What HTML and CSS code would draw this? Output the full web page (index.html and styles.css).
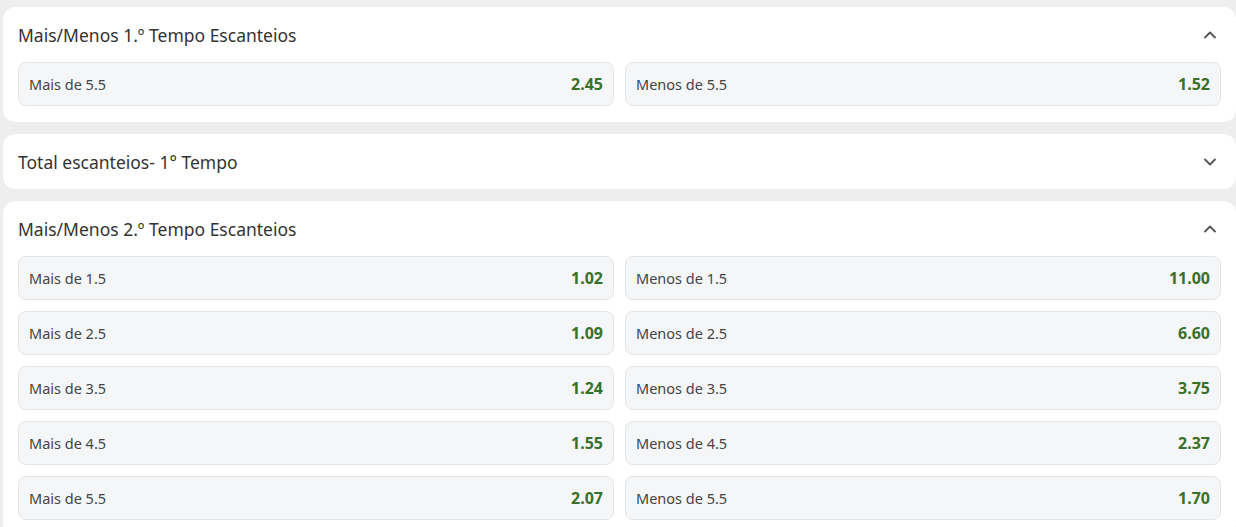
FILE: index.html
```html
<!DOCTYPE html>
<html lang="pt">
<head>
<meta charset="utf-8">
<link rel="stylesheet" href="styles.css">
</head>
<body>
<div class="list">
  <section class="card">
    <div class="head">
      <span class="title">Mais/Menos 1.º Tempo Escanteios</span>
      <svg class="chev" width="14" height="14" viewBox="0 0 14 14"><path d="M2 9.5 L7 4.5 L12 9.5" fill="none" stroke="#555" stroke-width="1.8" stroke-linecap="round" stroke-linejoin="round"/></svg>
    </div>
    <div class="grid">
      <div class="odd"><span class="lbl">Mais de 5.5</span><span class="val">2.45</span></div>
      <div class="odd"><span class="lbl">Menos de 5.5</span><span class="val">1.52</span></div>
    </div>
  </section>
  <section class="card closed">
    <div class="head">
      <span class="title">Total escanteios- 1° Tempo</span>
      <svg class="chev" width="14" height="14" viewBox="0 0 14 14"><path d="M2 4.5 L7 9.5 L12 4.5" fill="none" stroke="#555" stroke-width="1.8" stroke-linecap="round" stroke-linejoin="round"/></svg>
    </div>
  </section>
  <section class="card">
    <div class="head">
      <span class="title">Mais/Menos 2.º Tempo Escanteios</span>
      <svg class="chev" width="14" height="14" viewBox="0 0 14 14"><path d="M2 9.5 L7 4.5 L12 9.5" fill="none" stroke="#555" stroke-width="1.8" stroke-linecap="round" stroke-linejoin="round"/></svg>
    </div>
    <div class="grid">
      <div class="odd"><span class="lbl">Mais de 1.5</span><span class="val">1.02</span></div>
      <div class="odd"><span class="lbl">Menos de 1.5</span><span class="val">11.00</span></div>
      <div class="odd"><span class="lbl">Mais de 2.5</span><span class="val">1.09</span></div>
      <div class="odd"><span class="lbl">Menos de 2.5</span><span class="val">6.60</span></div>
      <div class="odd"><span class="lbl">Mais de 3.5</span><span class="val">1.24</span></div>
      <div class="odd"><span class="lbl">Menos de 3.5</span><span class="val">3.75</span></div>
      <div class="odd"><span class="lbl">Mais de 4.5</span><span class="val">1.55</span></div>
      <div class="odd"><span class="lbl">Menos de 4.5</span><span class="val">2.37</span></div>
      <div class="odd"><span class="lbl">Mais de 5.5</span><span class="val">2.07</span></div>
      <div class="odd"><span class="lbl">Menos de 5.5</span><span class="val">1.70</span></div>
    </div>
  </section>
</div>
</body>
</html>
```
FILE: styles.css
```css
html, body {
  margin: 0;
  padding: 0;
  background: #eeeeee;
  font-family: "Noto Sans", "Open Sans", sans-serif;
  overflow: hidden;
}
.list {
  display: flex;
  flex-direction: column;
  gap: 12px;
  padding: 7px 0 0 3px;
}
.card {
  background: #ffffff;
  border-radius: 12px;
  padding: 0 15px 16px 15px;
  box-shadow: 0 0 1px rgba(0,0,0,0.06);
}
.card.closed {
  padding-bottom: 0;
}
.head {
  height: 55px;
  display: flex;
  align-items: center;
  justify-content: space-between;
}
.title {
  font-size: 17.5px;
  color: #333333;
}
.chev {
  margin-right: 4px;
}
.grid {
  display: grid;
  grid-template-columns: 1fr 1fr;
  column-gap: 11px;
  row-gap: 11px;
}
.odd {
  height: 44px;
  box-sizing: border-box;
  background: #f5f6f7;
  border: 1px solid #e4e5e6;
  border-radius: 8px;
  display: flex;
  align-items: center;
  justify-content: space-between;
  padding: 0 10px;
}
.lbl {
  font-size: 14.5px;
  color: #444444;
}
.val {
  font-size: 16px;
  font-weight: 700;
  color: #3a7029;
}
```
